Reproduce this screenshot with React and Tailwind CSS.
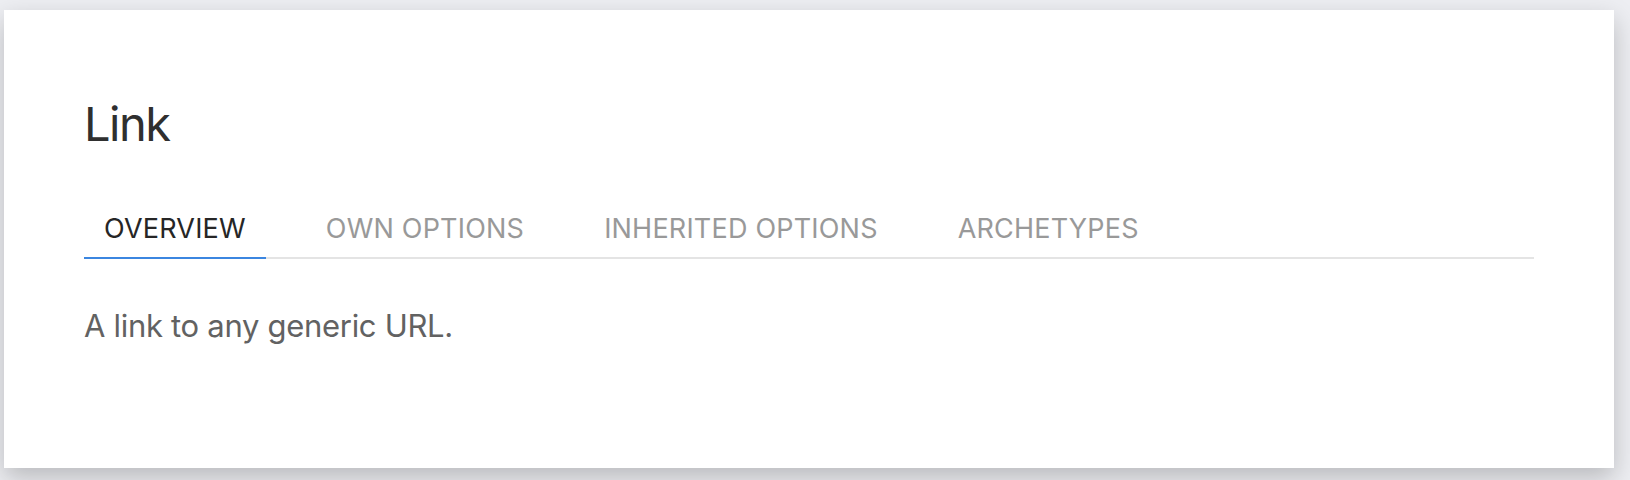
import React, { useState } from 'react';

const tabs = ['Overview', 'Own options', 'Inherited options', 'Archetypes'];

export default function App() {
    const [activeTab, setActiveTab] = useState('Overview');

    return (
        <div className="h-[480px] w-[1630px] overflow-hidden bg-[#edeef2] pt-[10px] pl-[4px]" style={{ fontFamily: 'Inter, "Noto Sans", sans-serif' }}>
            <div className="w-[1610px] h-[458px] bg-white px-[80px] pt-[90px] shadow-[0_10px_24px_rgba(0,0,0,0.22)]">
                <h1 className="text-[47px] leading-none tracking-[-1.5px] text-[#2f2f2f]">Link</h1>

                {/* Tabs */}
                <div className="mt-[68px] flex flex-row gap-[40px] border-b-2 border-[#e4e4e4]">
                    {tabs.map((tab) => (
                        <button
                            key={tab}
                            onClick={() => setActiveTab(tab)}
                            className={`-mb-[2px] px-[20px] pb-[15px] text-[27px] leading-none tracking-[0.2px] uppercase border-b-2 ${
                                activeTab === tab ? 'text-[#262626] border-[#3b86e0]' : 'text-[#999999] border-transparent'
                            }`}
                        >
                            {tab}
                        </button>
                    ))}
                </div>

                <p className="mt-[51px] text-[31px] leading-none tracking-[-0.3px] text-[#626262]">A link to any generic URL.</p>
            </div>
        </div>
    );
}
